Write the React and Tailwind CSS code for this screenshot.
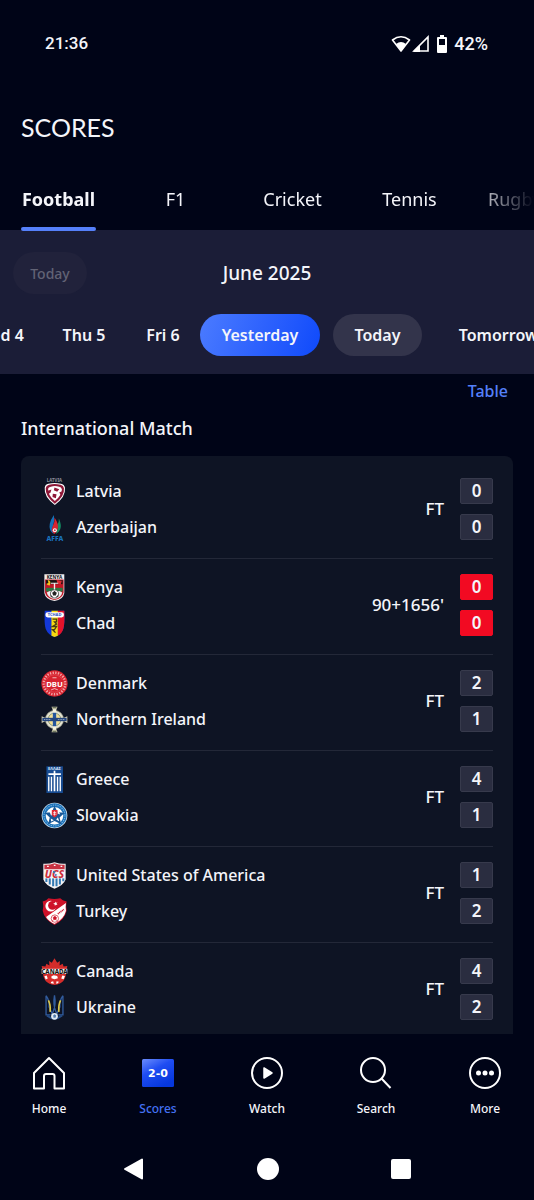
import React, { useState } from "react";

const sports = ["Football", "F1", "Cricket", "Tennis"];

const days = [
  { label: "Wed 4", className: "w-[84px]" },
  { label: "Thu 5", className: "w-[84px]" },
  { label: "Fri 6", className: "w-[74px]" },
  { label: "Yesterday", className: "w-[120px]" },
  { label: "Today", className: "w-[89px] ml-[13px] bg-[#33344b]" },
  { label: "Tomorrow", className: "w-[127px] ml-[13px]" },
];

// Club crests, all drawn on an 80x80 grid
const Crest = ({ children }) => (
  <svg viewBox="0 0 80 80" className="w-[27px] h-[27px] shrink-0" aria-hidden="true">
    {children}
  </svg>
);

const Latvia = () => (
  <Crest>
    <text x="40" y="13" textAnchor="middle" fontSize="13" fontWeight="700" fill="#8d8f9b">LATVIA</text>
    <path d="M11 29Q12 19 22 17Q40 12 59 17Q69 19 71 29Q74 56 41 80Q8 56 11 29Z" fill="#fff" />
    <path d="M14 30Q15 22 24 20Q40 15 58 20Q67 22 68 30Q71 53 41 76Q12 53 14 30Z" fill="#8e1838" />
    <path d="M21 32Q22 27 29 26Q41 22 54 26Q60 27 62 33Q62 51 41 68Q20 52 21 32Z" fill="#fff" />
    <path d="M20 38L31 34L28 44L20 48ZM40 28L54 33L48 41L38 36ZM35 47L46 48L44 60L34 56ZM54 43L63 39L59 51Z" fill="#8e1838" />
  </Crest>
);

const Azerbaijan = () => (
  <Crest>
    <path d="M38 3Q28 18 26 29Q22 50 38 60Q32 44 36 34Q42 18 38 3Z" fill="#1470b8" />
    <path d="M53 13Q62 34 57 45Q52 56 44 59Q51 45 48 32Q54 25 53 13Z" fill="#128c62" />
    <path d="M40 10Q54 30 49 46Q46 57 40 59Q28 51 34 38Q42 25 40 10Z" fill="#d8232f" />
    <circle cx="41" cy="48" r="6" fill="#fff" />
    <circle cx="41" cy="48" r="3" fill="#c43b4a" />
    <text x="41" y="79" textAnchor="middle" fontSize="20" fontWeight="800" fill="#1a72be">AFFA</text>
  </Crest>
);

const Kenya = () => (
  <Crest>
    <path d="M10 1H69V56Q66 76 40 80Q13 76 10 56Z" fill="#f3eeee" />
    <path d="M12 16H67V55Q64 73 40 77Q15 73 12 55Z" fill="#c11626" />
    <text x="40" y="14" textAnchor="middle" fontSize="14" fontWeight="700" fill="#111">KENYA</text>
    <path d="M15 18H64V30H15Z" fill="#1b1414" />
    <path d="M15 41H64V52H15Z" fill="#2b7a43" />
    <path d="M20 18Q32 20 26 34Q18 34 16 29L22 27Z" fill="#f2c41a" />
    <path d="M46 18L62 20L58 32L49 28Z" fill="#e02b31" />
    <path d="M29 26H51V29H42V50H38V29H29Z" fill="#f3eeee" />
    <path d="M17 55Q20 70 40 75Q60 70 63 55L54 50H26Z" fill="#eee" />
    <circle cx="40" cy="59" r="12" fill="#fff" stroke="#222" strokeWidth="2" />
    <path d="M35 56L40 52L45 56L43 62H37ZM29 64L34 68M51 64L46 68" fill="#222" stroke="#222" strokeWidth="3" />
  </Crest>
);

const Chad = () => (
  <Crest>
    <path d="M11 2H69Q71 40 66 56Q59 73 40 80Q21 73 14 56Q9 40 11 2Z" fill="#1338d8" />
    <path d="M31 2H50V76L40 80L31 76Z" fill="#f7d90f" />
    <path d="M50 2H69Q71 40 66 56Q62 70 50 76Z" fill="#e4132a" />
    <rect x="13" y="7" width="55" height="15" rx="7" fill="#fff" />
    <text x="40" y="19" textAnchor="middle" fontSize="12" fontWeight="700" fill="#2a4bc0">TCHAD</text>
    <path d="M34 27H46V35H40L46 42L34 49H46L40 58H34L43 67" fill="none" stroke="#473e12" strokeWidth="4" />
  </Crest>
);

const Denmark = () => (
  <Crest>
    <circle cx="40" cy="40" r="39" fill="#d7232f" />
    <circle cx="40" cy="40" r="32" fill="none" stroke="#f2a3a5" strokeWidth="7" strokeDasharray="4 4" />
    <circle cx="40" cy="40" r="26" fill="none" stroke="#ef8a8d" strokeWidth="1" />
    <path d="M15 29H65V51H15Z" fill="#d7232f" />
    <text x="40" y="49" textAnchor="middle" fontSize="23" fontWeight="700" fill="#fff">DBU</text>
    <path d="M30 59L40 55L50 59M34 23H46" stroke="#fff" strokeWidth="2" fill="none" />
  </Crest>
);

const NorthernIreland = () => (
  <Crest>
    <path d="M31 2H49L45 12V68L49 78H31L35 68V12ZM2 30L12 35H68L78 30V50L68 45H12L2 50Z" fill="#d8d3b5" />
    <circle cx="40" cy="40" r="27" fill="#e4e2d0" stroke="#969b87" strokeWidth="2" />
    <circle cx="40" cy="40" r="19" fill="#f3df94" stroke="#6a816b" strokeWidth="2" />
    <path d="M35 10H45V70H35Z" fill="#f4f1df" />
    <path d="M35 20H45V60H35Z" fill="#24559d" />
    <path d="M4 35H76V45H4Z" fill="#24457e" />
    <path d="M9 40H30M50 40H71" stroke="#92a4bd" strokeWidth="3" strokeDasharray="3 2" />
    <path d="M34 5H46M34 75H46" stroke="#4d5b43" strokeWidth="3" />
  </Crest>
);

const Greece = () => (
  <Crest>
    <path d="M16 1H65V80H16Z" fill="#174b91" />
    <text x="40" y="12" textAnchor="middle" fontSize="12" fontWeight="700" fill="#d9e5f5">ΕΛΛΑΣ</text>
    <path d="M40 14V75M22 24H59" stroke="#fff" strokeWidth="5" />
    <path d="M23 75V32M31 75V32M49 75V32M57 75V32" stroke="#fff" strokeWidth="4" />
  </Crest>
);

const Slovakia = () => (
  <Crest>
    <circle cx="40" cy="40" r="38" fill="#e4f1fa" />
    <circle cx="40" cy="40" r="36" fill="#1b71b8" />
    <circle cx="40" cy="40" r="31" fill="none" stroke="#79b2df" strokeWidth="3" strokeDasharray="4 3" />
    <circle cx="40" cy="41" r="26" fill="#fff" />
    <path d="M40 11L49 30L70 32L55 46L60 66L40 56L21 66L26 46L11 32L32 30Z" fill="#195795" />
    <path d="M25 28L38 31L30 41ZM52 27L57 37L47 33ZM29 49L38 54L30 58ZM50 46L54 57L45 52Z" fill="#fff" />
    <path d="M32 24H49V36Q47 44 40 46Q33 43 32 36Z" fill="#e02a35" />
    <path d="M40 27V40M36 31H45M35 36H46" stroke="#fff" strokeWidth="2" />
  </Crest>
);

const Usa = () => (
  <Crest>
    <path d="M7 5Q20 7 40 1Q60 7 73 5V52Q67 69 40 79Q13 69 7 52Z" fill="#f6f4f5" />
    <path d="M10 8Q22 10 40 4Q58 10 70 8V22H10Z" fill="#c83242" />
    <path d="M16 48V59M26 48V67M36 48V72M46 48V72M56 48V67M66 48V57" stroke="#3279b3" strokeWidth="6" />
    <path d="M10 22H70V48H10Z" fill="#f6f4f5" />
    <text x="40" y="47" textAnchor="middle" fontSize="31" fontWeight="800" fontStyle="italic" fill="#cf2f3c">UCS</text>
    <path d="M36 26L44 28L39 34L35 32ZM42 35L48 38L42 44Z" fill="#347ab1" />
    <path d="M18 13h5M38 10h5M58 13h5" stroke="#fff" strokeWidth="4" />
  </Crest>
);

const Turkey = () => (
  <Crest>
    <path d="M22 1Q40 5 57 1Q63 8 76 10Q73 24 76 38Q70 65 40 80Q10 65 5 38Q9 24 5 10Q17 8 22 1Z" fill="#ce1229" />
    <path d="M74 15Q72 26 74 38Q68 63 40 77Q22 68 15 56Z" fill="#fff" />
    <circle cx="29" cy="24" r="16" fill="#fff" />
    <circle cx="34" cy="22" r="13" fill="#ce1229" />
    <path d="M42 10L44 14L49 13L46 17L49 21L44 20L41 24V19L36 17L41 15Z" fill="#fff" />
    <circle cx="41" cy="61" r="11" fill="#fff" stroke="#ce1229" strokeWidth="2" />
    <path d="M36 58L41 54L46 58L44 64H38ZM33 68L37 65M49 68L45 65" fill="#ce1229" stroke="#ce1229" strokeWidth="2" />
    <path d="M50 47L68 34" stroke="#ce1229" strokeWidth="5" strokeDasharray="3 2" />
  </Crest>
);

const Canada = () => (
  <Crest>
    <path d="M40 1L48 14L56 9L55 22L64 17L67 25L78 24L74 43Q74 76 40 80Q6 76 6 43L2 24L13 25L16 17L25 22L24 9L32 14Z" fill="#d52c2a" />
    <path d="M2 32H78V47H2Z" fill="#f7f4f3" />
    <text x="40" y="46" textAnchor="middle" fontSize="18" fontWeight="800" fill="#171717">CANADA</text>
    <path d="M31 54L38 51L48 53L50 60L40 63L31 60ZM10 54L17 52L20 61L14 64ZM63 52L71 53L67 63L60 61ZM29 71L36 69L38 76L30 75ZM46 69L53 70L50 75L45 76Z" fill="#fff" />
  </Crest>
);

const Ukraine = () => (
  <Crest>
    <path d="M15 5Q25 18 24 38L34 61M65 5Q55 18 56 38L46 61M40 4Q45 32 36 52L30 61M40 4Q35 32 44 52L50 61M15 5V62H28M65 5V62H52" fill="none" stroke="#315c9e" strokeWidth="4" />
    <path d="M22 19Q29 32 27 53M58 19Q51 32 53 53" fill="none" stroke="#dcc747" strokeWidth="5" />
    <path d="M18 64Q40 83 62 64" fill="none" stroke="#254b83" strokeWidth="6" />
    <circle cx="40" cy="66" r="10" fill="#dfebf4" />
    <path d="M36 64L40 60L45 64L43 70H37Z" fill="#527caf" />
  </Crest>
);

const matches = [
  { home: "Latvia", away: "Azerbaijan", homeCrest: Latvia, awayCrest: Azerbaijan, score: [0, 0], status: "FT" },
  { home: "Kenya", away: "Chad", homeCrest: Kenya, awayCrest: Chad, score: [0, 0], status: "90+1656'", live: true },
  { home: "Denmark", away: "Northern Ireland", homeCrest: Denmark, awayCrest: NorthernIreland, score: [2, 1], status: "FT" },
  { home: "Greece", away: "Slovakia", homeCrest: Greece, awayCrest: Slovakia, score: [4, 1], status: "FT" },
  { home: "United States of America", away: "Turkey", homeCrest: Usa, awayCrest: Turkey, score: [1, 2], status: "FT" },
  { home: "Canada", away: "Ukraine", homeCrest: Canada, awayCrest: Ukraine, score: [4, 2], status: "FT" },
];

const Team = ({ name, Badge }) => (
  <div className="flex items-center gap-2 h-[26px]">
    <Badge />
    <span>{name}</span>
  </div>
);

const Score = ({ value, live }) => (
  <span
    className={`flex items-center justify-center w-[33px] h-[26px] rounded-xs border text-[17px] font-semibold ${
      live ? "bg-[#f20a22] border-[#f20a22]" : "bg-[#2a2d40] border-[#373a4c]"
    }`}
  >
    {value}
  </span>
);

const MatchRow = ({ match }) => (
  <li className="flex items-center pt-[15px] pb-[18px] border-b border-[#232838] text-[16px] font-medium">
    <div className="flex-1 flex flex-col gap-[10px]">
      <Team name={match.home} Badge={match.homeCrest} />
      <Team name={match.away} Badge={match.awayCrest} />
    </div>
    <span className="mr-4 text-[17px]">{match.status}</span>
    <div className="flex flex-col gap-[10px]">
      <Score value={match.score[0]} live={match.live} />
      <Score value={match.score[1]} live={match.live} />
    </div>
  </li>
);

const navItems = [
  {
    label: "Home",
    icon: (
      <path d="M18 3L33 18V33.500H23.500V21Q23.500 19 21.500 19H15Q13 19 13 21V33.500H3V18Z" fill="none" stroke="#fff" strokeWidth="2" strokeLinejoin="round" />
    ),
  },
  {
    label: "Scores",
    icon: (
      <>
        <defs>
          <linearGradient id="scoreFill" x1="0" y1="0" x2="0.600" y2="1">
            <stop offset="0" stopColor="#6c8dfc" />
            <stop offset="0.450" stopColor="#1f4df2" />
            <stop offset="1" stopColor="#0637dc" />
          </linearGradient>
        </defs>
        <rect x="2" y="4" width="32" height="28" rx="1.500" fill="url(#scoreFill)" />
        <text x="18" y="22" textAnchor="middle" fontFamily="DejaVu Sans, sans-serif" fontSize="11" fontWeight="700" fill="#fff">2-0</text>
      </>
    ),
  },
  {
    label: "Watch",
    icon: (
      <>
        <circle cx="18" cy="18" r="15" fill="none" stroke="#fff" strokeWidth="2" />
        <path d="M15 13V23L23 18Z" fill="#fff" stroke="#fff" strokeWidth="1.500" strokeLinejoin="round" />
      </>
    ),
  },
  {
    label: "Search",
    icon: (
      <>
        <circle cx="15" cy="15" r="12" fill="none" stroke="#fff" strokeWidth="2" />
        <path d="M23.500 23.500L32.500 33" stroke="#fff" strokeWidth="2" />
      </>
    ),
  },
  {
    label: "More",
    icon: (
      <>
        <circle cx="18" cy="18" r="15" fill="none" stroke="#fff" strokeWidth="2" />
        <circle cx="11.500" cy="18" r="2.500" fill="#fff" />
        <circle cx="18" cy="18" r="2.500" fill="#fff" />
        <circle cx="24.500" cy="18" r="2.500" fill="#fff" />
      </>
    ),
  },
];

const StatusBar = () => (
  <div className="flex items-center justify-between h-[87px] shrink-0 pl-[45px] pr-[46px] font-['Roboto',sans-serif] text-[17px] font-medium">
    <span>21:36</span>
    <div className="flex items-center">
      <svg viewBox="0 0 20 18" className="w-5 h-[18px] mr-px" fill="none" aria-hidden="true">
        <path d="M1.500 5Q10 -1.500 18.500 5L10 16Z" stroke="#fff" strokeWidth="1.600" strokeLinejoin="round" />
        <path d="M5 9Q10 5 15 9L10 16.500Z" fill="#fff" />
      </svg>
      <svg viewBox="0 0 18 18" className="w-[18px] h-[18px] mr-[6px]" aria-hidden="true">
        <path d="M16 2V16H2Z" fill="none" stroke="#fff" strokeWidth="1.600" />
        <path d="M8 10V17H1Z" fill="#fff" />
      </svg>
      <svg viewBox="0 0 12 18" className="w-3 h-[18px] mr-[6px]" aria-hidden="true">
        <path d="M4 0H8V2H10Q11 2 11 3V17Q11 18 10 18H2Q1 18 1 17V3Q1 2 2 2H4Z" fill="#fff" />
        <path d="M3 4H9V10H3Z" fill="#000417" />
      </svg>
      <span className="text-[18px]">42%</span>
    </div>
  </div>
);

export default function App() {
  const [sport, setSport] = useState("Football");
  const [day, setDay] = useState("Yesterday");
  const [page, setPage] = useState("Scores");

  return (
    <div className="flex flex-col h-screen overflow-hidden bg-[#000417] text-[#f4f5fa] font-['Noto_Sans',sans-serif]">
      <StatusBar />

      <h1 className="shrink-0 h-20 leading-[80px] px-[21px] text-[25px] font-normal font-['Lato',sans-serif]">SCORES</h1>

      {/* Sport tabs */}
      <nav className="relative z-10 flex shrink-0 h-16 text-[18px] [mask-image:linear-gradient(to_right,#000_88%,transparent)]">
        {sports.map((name) => (
          <button
            key={name}
            onClick={() => setSport(name)}
            className={`relative w-[117px] h-16 shrink-0 ${sport === name ? "font-bold" : ""}`}
          >
            {name}
            {sport === name && (
              <span className="absolute bottom-0 inset-x-[21px] h-1 rounded-xs bg-[#5580fa]" />
            )}
          </button>
        ))}
        <button className="px-5 shrink-0 whitespace-nowrap" onClick={() => setSport("Rugby Union")}>
          Rugby Union
        </button>
      </nav>

      {/* Date picker */}
      <section className="shrink-0 -mt-px h-36 bg-[#1b1d37] pt-[22px] overflow-hidden">
        <div className="grid grid-cols-[74px_1fr_74px] items-center px-[13px]">
          <button disabled className="h-[42px] rounded-full bg-[#21223b] text-[#626375] text-[14px] font-medium">
            Today
          </button>
          <h2 className="text-center text-[19px] font-medium">June 2025</h2>
        </div>
        <div className="flex mt-5 -ml-[42px] text-[16px] font-semibold">
          {days.map((d) => (
            <button
              key={d.label}
              onClick={() => setDay(d.label)}
              className={`h-[42px] shrink-0 rounded-full ${d.className} ${
                day === d.label ? "bg-linear-110 from-[#4b7bff] via-[#2e62fd] to-[#0d49fb]" : ""
              }`}
            >
              {d.label}
            </button>
          ))}
        </div>
      </section>

      <main className="flex-1 min-h-0 px-[21px] overflow-y-auto [scrollbar-width:none]">
        <div className="flex justify-end pr-[5px] pt-[5px]">
          <a href="#table" className="text-[16px] leading-6 font-medium text-[#5580fa]">Table</a>
        </div>
        <h2 className="mt-3 mb-[14px] text-[18px] leading-[27px] font-medium">International Match</h2>
        <ul className="px-5 pt-[7px] rounded-t-lg bg-[#0e1424]">
          {matches.map((match) => (
            <MatchRow key={match.home} match={match} />
          ))}
        </ul>
      </main>

      {/* Bottom navigation */}
      <nav className="shrink-0 flex justify-between px-4 pt-[21px] h-[104px]">
        {navItems.map((item) => (
          <button
            key={item.label}
            onClick={() => setPage(item.label)}
            className={`flex flex-col items-center w-[66px] gap-[10px] text-[12px] leading-4 font-medium ${
              page === item.label ? "text-[#4472f5]" : ""
            }`}
          >
            <svg viewBox="0 0 36 36" className="w-9 h-9" aria-hidden="true">
              {item.icon}
            </svg>
            {item.label}
          </button>
        ))}
      </nav>

      {/* Android system buttons */}
      <div className="shrink-0 flex justify-around items-center px-[67px] h-[62px]">
        <button aria-label="Back">
          <svg viewBox="0 0 22 22" className="w-[22px] h-[22px]" aria-hidden="true">
            <path d="M2 11L19 1.500V20.500Z" fill="#fff" stroke="#fff" strokeWidth="2" strokeLinejoin="round" />
          </svg>
        </button>
        <button aria-label="Home screen" className="w-[22px] h-[22px] rounded-full bg-white" />
        <button aria-label="Recent apps" className="w-5 h-5 rounded-xs bg-white" />
      </div>
    </div>
  );
}
